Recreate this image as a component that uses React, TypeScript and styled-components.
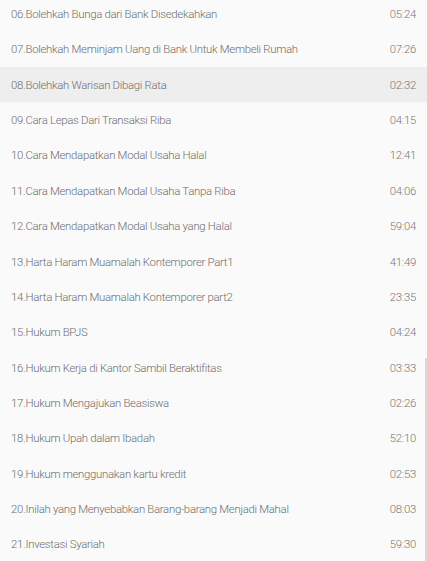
import React, { FC } from "react";
import styled, { createGlobalStyle } from "styled-components";

const GlobalStyle = createGlobalStyle`
  html, body {
    margin: 0;
    padding: 0;
    background: #fafafa;
  }
  body {
    font-family: "Roboto Light", Roboto, "Liberation Sans", sans-serif;
  }
`;

const Screen = styled.div`
  position: relative;
  width: 427px;
  height: 561px;
  overflow: hidden;
  background: #fafafa;
`;

const List = styled.ul`
  list-style: none;
  margin: -3.7px 0 0 0;
  padding: 0;
  display: flex;
  flex-direction: column;
`;

const Row = styled.li<{ $active?: boolean }>`
  display: flex;
  align-items: center;
  justify-content: space-between;
  height: 35.36px;
  padding: 0 11px 0 11px;
  background: ${p => (p.$active ? "#eeeeee" : "transparent")};
  color: #6e6e6e;
  font-size: 11.4px;
  font-weight: 300;
  letter-spacing: -0.3px;
`;

const Title = styled.span`
  white-space: nowrap;
`;

const Duration = styled.span`
  color: #777777;
`;

const ScrollThumb = styled.div`
  position: absolute;
  right: 0;
  top: 358px;
  width: 2px;
  height: 203px;
  background: #d9d9d9;
`;

type Track = { title: string; duration: string };

const tracks: Track[] = [
  { title: "06.Bolehkah Bunga dari Bank Disedekahkan", duration: "05:24" },
  { title: "07.Bolehkah Meminjam Uang di Bank Untuk Membeli Rumah", duration: "07:26" },
  { title: "08.Bolehkah Warisan Dibagi Rata", duration: "02:32" },
  { title: "09.Cara Lepas Dari Transaksi Riba", duration: "04:15" },
  { title: "10.Cara Mendapatkan Modal Usaha Halal", duration: "12:41" },
  { title: "11.Cara Mendapatkan Modal Usaha Tanpa Riba", duration: "04:06" },
  { title: "12.Cara Mendapatkan Modal Usaha yang Halal", duration: "59:04" },
  { title: "13.Harta Haram Muamalah Kontemporer Part1", duration: "41:49" },
  { title: "14.Harta Haram Muamalah Kontemporer part2", duration: "23:35" },
  { title: "15.Hukum BPJS", duration: "04:24" },
  { title: "16.Hukum Kerja di Kantor Sambil Beraktifitas", duration: "03:33" },
  { title: "17.Hukum Mengajukan Beasiswa", duration: "02:26" },
  { title: "18.Hukum Upah dalam Ibadah", duration: "52:10" },
  { title: "19.Hukum menggunakan kartu kredit", duration: "02:53" },
  { title: "20.Inilah yang Menyebabkan Barang-barang Menjadi Mahal", duration: "08:03" },
  { title: "21.Investasi Syariah", duration: "59:30" }
];

const App: FC = () => {
  const activeIndex = 2;
  return (
    <>
      <GlobalStyle />
      <Screen>
        <List>
          {tracks.map((track, i) => (
            <Row key={track.title} $active={i === activeIndex}>
              <Title>{track.title}</Title>
              <Duration>{track.duration}</Duration>
            </Row>
          ))}
        </List>
        <ScrollThumb />
      </Screen>
    </>
  );
};

export default App;
